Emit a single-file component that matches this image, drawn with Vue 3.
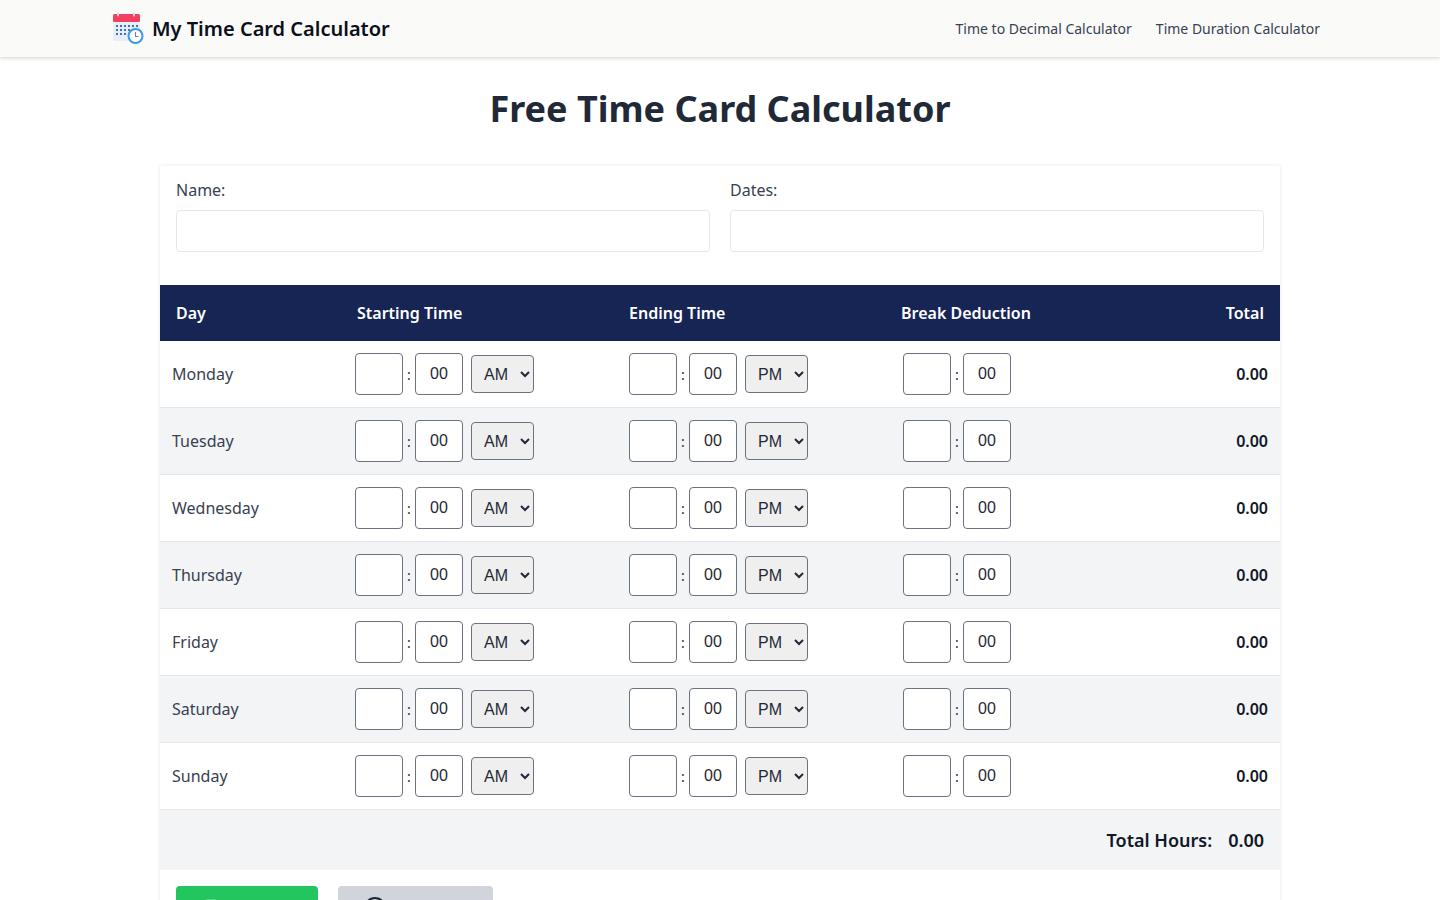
<script setup>
const days = ['Monday', 'Tuesday', 'Wednesday', 'Thursday', 'Friday', 'Saturday', 'Sunday']
</script>

<template>
  <div class="page">
    <header class="topbar">
      <div class="brand">
        <svg class="logo" viewBox="0 0 32 32" width="32" height="32" aria-hidden="true">
          <rect x="1" y="4" width="27" height="25" rx="1.5" fill="#e8edf8" />
          <rect x="1" y="2" width="27" height="8" rx="1.5" fill="#f43f5e" />
          <rect x="5" y="0.5" width="2" height="4" rx="1" fill="#cfd8ea" />
          <rect x="21" y="0.5" width="2" height="4" rx="1" fill="#cfd8ea" />
          <g fill="#3f6fb5">
            <rect x="4" y="13" width="2" height="2" /><rect x="8" y="13" width="2" height="2" /><rect x="12" y="13" width="2" height="2" /><rect x="16" y="13" width="2" height="2" /><rect x="20" y="13" width="2" height="2" /><rect x="24" y="13" width="2" height="2" />
            <rect x="4" y="17" width="2" height="2" /><rect x="8" y="17" width="2" height="2" /><rect x="12" y="17" width="2" height="2" /><rect x="16" y="17" width="2" height="2" />
            <rect x="4" y="21" width="2" height="2" /><rect x="8" y="21" width="2" height="2" /><rect x="12" y="21" width="2" height="2" />
          </g>
          <circle cx="23.5" cy="24" r="7" fill="#fff" stroke="#3b9ae8" stroke-width="2" />
          <path d="M23.5 20v4.5h3" fill="none" stroke="#7a8494" stroke-width="1.2" />
        </svg>
        <span class="brand-name">My Time Card Calculator</span>
      </div>
      <nav class="links">
        <a>Time to Decimal Calculator</a>
        <a>Time Duration Calculator</a>
      </nav>
    </header>

    <main>
      <h1>Free Time Card Calculator</h1>
      <section class="card">
        <div class="fields">
          <label><span>Name:</span><input type="text" /></label>
          <label><span>Dates:</span><input type="text" /></label>
        </div>

        <div class="grid head">
          <div class="h-day">Day</div>
          <div>Starting Time</div>
          <div>Ending Time</div>
          <div>Break Deduction</div>
          <div class="right">Total</div>
        </div>

        <div v-for="(d, i) in days" :key="d" class="grid row" :class="{ alt: i % 2 === 1 }">
          <div class="day">{{ d }}</div>
          <div class="time start">
            <input class="num" type="text" /><i>:</i><input class="num" type="text" value="00" />
            <select><option>AM</option><option>PM</option></select>
          </div>
          <div class="time end">
            <input class="num" type="text" /><i>:</i><input class="num" type="text" value="00" />
            <select><option>PM</option><option>AM</option></select>
          </div>
          <div class="time brk">
            <input class="num" type="text" /><i>:</i><input class="num" type="text" value="00" />
          </div>
          <div class="total">0.00</div>
        </div>

        <div class="sum"><span>Total Hours:</span><span>0.00</span></div>

        <div class="actions">
          <button class="save">
            <svg viewBox="0 0 16 20" width="14" height="18" aria-hidden="true"><rect x="1.5" y="1.5" width="13" height="17" rx="1.5" fill="none" stroke="#fff" stroke-width="2" /></svg>
            Save PDF
          </button>
          <button class="clear">
            <svg viewBox="0 0 24 24" width="24" height="24" aria-hidden="true"><circle cx="12" cy="12" r="10" fill="none" stroke="#1f2937" stroke-width="2" /></svg>
            CLEAR ALL
          </button>
        </div>
      </section>
    </main>
  </div>
</template>

<style>
body { margin: 0; background: #fff; }
</style>

<style scoped>
.page { font-family: "Noto Sans", "Open Sans", sans-serif; color: #1f2937; }
.topbar { height: 57px; background: #fafaf9; box-shadow: 0 1px 4px rgba(0,0,0,.18); display: flex; align-items: center; justify-content: space-between; padding: 0 120px 0 112px; box-sizing: border-box; }
.brand { display: flex; align-items: center; gap: 8px; }
.logo { display: block; margin-top: -1px; }
.brand-name { font-size: 20px; font-weight: 600; color: #0b0f19; }
.links { display: flex; gap: 24px; font-size: 14px; color: #374151; }
h1 { margin: 0; padding-top: 29px; height: 80px; box-sizing: content-box; font-size: 36px; line-height: 46px; font-weight: 700; text-align: center; color: #1f2937; }
.card { width: 1120px; margin: 0 auto; background: #fff; box-shadow: 0 0 4px rgba(0,0,0,.1); }
.fields { display: grid; grid-template-columns: 1fr 1fr; gap: 20px; padding: 12px 16px 33px; }
.fields label { display: block; font-size: 16px; color: #374151; }
.fields span { display: block; height: 32px; line-height: 24px; }
.fields input { width: 100%; height: 42px; box-sizing: border-box; border: 1px solid #e5e7eb; border-radius: 4px; background: #fff; }
.grid { display: grid; grid-template-columns: 181px 272px 272px 272px 123px; align-items: center; }
.head { height: 56px; background: #172554; color: #fff; font-size: 16px; font-weight: 600; }
.head > div { padding-left: 16px; }
.head > .right { padding: 0 16px 0 0; text-align: right; }
.row { height: 67px; border-bottom: 1px solid #e5e7eb; box-sizing: border-box; }
.alt { background: #f3f4f6; }
.day { padding-left: 12px; font-size: 16px; color: #374151; }
.time { display: flex; align-items: center; }
.start { padding-left: 14px; }
.end { padding-left: 16px; }
.brk { padding-left: 18px; }
.time i { width: 12px; text-align: center; font-style: normal; font-size: 14px; }
.num { width: 48px; height: 42px; box-sizing: border-box; border: 1px solid #6b7280; border-radius: 4px; background: #fff; text-align: center; font: 16px "Liberation Sans", sans-serif; color: #1f2937; padding: 0; }
select { margin-left: 8px; width: 63px; height: 38px; box-sizing: border-box; border: 1px solid #6b7280; border-radius: 4px; background-color: #efefef; font: 16px "Liberation Sans", sans-serif; color: #1f2937; padding: 0 0 0 8px; }
.total { padding-right: 12px; text-align: right; font-size: 16px; font-weight: 600; color: #111827; }
.sum { height: 60px; background: #f3f4f6; display: flex; align-items: center; justify-content: flex-end; gap: 16px; padding-right: 16px; font-size: 18px; font-weight: 600; color: #111827; }
.actions { display: flex; gap: 20px; padding: 16px; }
.actions button { display: flex; align-items: center; justify-content: center; gap: 10px; height: 44px; border: 0; border-radius: 4px; font: 600 14px "Noto Sans", sans-serif; }
.save { width: 142px; background: #22c55e; color: #fff; }
.clear { width: 155px; background: #d1d5db; color: #1f2937; }
</style>
